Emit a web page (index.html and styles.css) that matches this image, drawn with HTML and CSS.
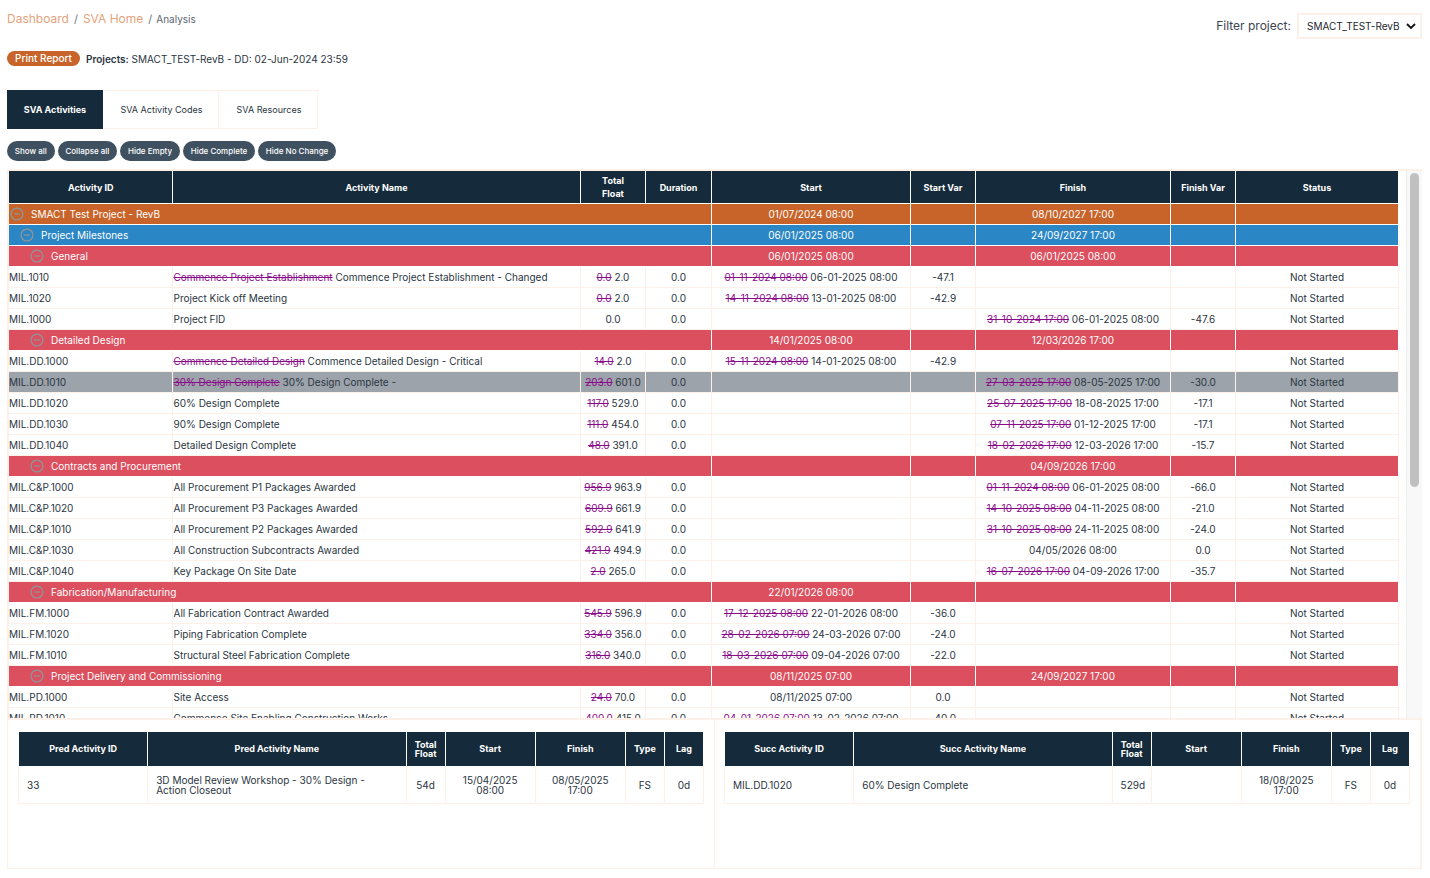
FILE: index.html
```html
<!DOCTYPE html>
<html lang="en">
<head>
    <meta charset="UTF-8">
    <title>SVA Analysis</title>
    <link rel="stylesheet" href="styles.css">
</head>
<body>
    <svg class="defs" width="0" height="0">
      <symbol id="minus" viewBox="0 0 14 14">
        <circle cx="7" cy="7" r="5.9" fill="none" stroke="currentColor" stroke-width="1.3"/>
        <path d="M4.2 7h5.6" stroke="currentColor" stroke-width="1.3"/>
      </symbol>
    </svg>

    <div class="topbar">
      <div class="crumbs">
        <a class="crumb-link">Dashboard</a><span class="crumb-sep">/</span><a class="crumb-link">SVA Home</a><span class="crumb-sep crumb-sep-small">/</span><span class="crumb-now">Analysis</span>
      </div>
      <div class="filter">
        <label class="filter-label">Filter project:</label>
        <div class="select">
          <span>SMACT_TEST-RevB</span>
          <svg width="10" height="7" viewBox="0 0 10 7"><path d="M1 1l4 4 4-4" fill="none" stroke="#111" stroke-width="1.8"/></svg>
        </div>
      </div>
    </div>

    <div class="report-row">
      <button type="button" class="print-btn">Print Report</button>
      <span class="report-text"><b>Projects:</b> SMACT_TEST-RevB - DD: 02-Jun-2024 23:59</span>
    </div>

    <div class="tabs">
      <div class="tab tab-active">SVA Activities</div>
      <div class="tab tab-codes">SVA Activity Codes</div>
      <div class="tab tab-res">SVA Resources</div>
    </div>

    <div class="actions">
      <button type="button" class="pill">Show all</button>
      <button type="button" class="pill">Collapse all</button>
      <button type="button" class="pill">Hide Empty</button>
      <button type="button" class="pill">Hide Complete</button>
      <button type="button" class="pill">Hide No Change</button>
    </div>

    <div class="main-panel">
      <div class="table-scroll">
        <table class="grid">
          <colgroup>
            <col class="c-id"><col class="c-name"><col class="c-float"><col class="c-dur">
            <col class="c-start"><col class="c-svar"><col class="c-finish"><col class="c-fvar"><col class="c-status">
          </colgroup>
          <thead>
            <tr><th>Activity ID</th><th>Activity Name</th><th>Total<br>Float</th><th>Duration</th><th>Start</th><th>Start Var</th><th>Finish</th><th>Finish Var</th><th>Status</th></tr>
          </thead>
          <tbody>
            <tr class="group g-project"><td colspan="4"><div class="g-title lvl1"><svg class="minus"><use href="#minus"/></svg>SMACT Test Project - RevB</div></td><td>01/07/2024 08:00</td><td></td><td>08/10/2027 17:00</td><td></td><td></td></tr>
            <tr class="group g-wbs"><td colspan="4"><div class="g-title lvl2"><svg class="minus"><use href="#minus"/></svg>Project Milestones</div></td><td>06/01/2025 08:00</td><td></td><td>24/09/2027 17:00</td><td></td><td></td></tr>
            <tr class="group g-sub"><td colspan="4"><div class="g-title lvl3"><svg class="minus"><use href="#minus"/></svg>General</div></td><td>06/01/2025 08:00</td><td></td><td>06/01/2025 08:00</td><td></td><td></td></tr>
            <tr><td>MIL.1010</td><td><s>Commence Project Establishment</s> Commence Project Establishment - Changed</td><td><s>0.0</s> 2.0</td><td>0.0</td><td><s>01-11-2024 08:00</s> 06-01-2025 08:00</td><td>-47.1</td><td></td><td></td><td>Not Started</td></tr>
            <tr><td>MIL.1020</td><td>Project Kick off Meeting</td><td><s>0.0</s> 2.0</td><td>0.0</td><td><s>14-11-2024 08:00</s> 13-01-2025 08:00</td><td>-42.9</td><td></td><td></td><td>Not Started</td></tr>
            <tr><td>MIL.1000</td><td>Project FID</td><td>0.0</td><td>0.0</td><td></td><td></td><td><s>31-10-2024 17:00</s> 06-01-2025 08:00</td><td>-47.6</td><td>Not Started</td></tr>
            <tr class="group g-sub"><td colspan="4"><div class="g-title lvl3"><svg class="minus"><use href="#minus"/></svg>Detailed Design</div></td><td>14/01/2025 08:00</td><td></td><td>12/03/2026 17:00</td><td></td><td></td></tr>
            <tr><td>MIL.DD.1000</td><td><s>Commence Detailed Design</s> Commence Detailed Design - Critical</td><td><s>14.0</s> 2.0</td><td>0.0</td><td><s>15-11-2024 08:00</s> 14-01-2025 08:00</td><td>-42.9</td><td></td><td></td><td>Not Started</td></tr>
            <tr class="selected"><td>MIL.DD.1010</td><td><s>30% Design Complete</s> 30% Design Complete -</td><td><s>203.0</s> 601.0</td><td>0.0</td><td></td><td></td><td><s>27-03-2025 17:00</s> 08-05-2025 17:00</td><td>-30.0</td><td>Not Started</td></tr>
            <tr><td>MIL.DD.1020</td><td>60% Design Complete</td><td><s>117.0</s> 529.0</td><td>0.0</td><td></td><td></td><td><s>25-07-2025 17:00</s> 18-08-2025 17:00</td><td>-17.1</td><td>Not Started</td></tr>
            <tr><td>MIL.DD.1030</td><td>90% Design Complete</td><td><s>111.0</s> 454.0</td><td>0.0</td><td></td><td></td><td><s>07-11-2025 17:00</s> 01-12-2025 17:00</td><td>-17.1</td><td>Not Started</td></tr>
            <tr><td>MIL.DD.1040</td><td>Detailed Design Complete</td><td><s>48.0</s> 391.0</td><td>0.0</td><td></td><td></td><td><s>18-02-2026 17:00</s> 12-03-2026 17:00</td><td>-15.7</td><td>Not Started</td></tr>
            <tr class="group g-sub"><td colspan="4"><div class="g-title lvl3"><svg class="minus"><use href="#minus"/></svg>Contracts and Procurement</div></td><td></td><td></td><td>04/09/2026 17:00</td><td></td><td></td></tr>
            <tr><td>MIL.C&amp;P.1000</td><td>All Procurement P1 Packages Awarded</td><td><s>956.9</s> 963.9</td><td>0.0</td><td></td><td></td><td><s>01-11-2024 08:00</s> 06-01-2025 08:00</td><td>-66.0</td><td>Not Started</td></tr>
            <tr><td>MIL.C&amp;P.1020</td><td>All Procurement P3 Packages Awarded</td><td><s>609.9</s> 661.9</td><td>0.0</td><td></td><td></td><td><s>14-10-2025 08:00</s> 04-11-2025 08:00</td><td>-21.0</td><td>Not Started</td></tr>
            <tr><td>MIL.C&amp;P.1010</td><td>All Procurement P2 Packages Awarded</td><td><s>592.9</s> 641.9</td><td>0.0</td><td></td><td></td><td><s>31-10-2025 08:00</s> 24-11-2025 08:00</td><td>-24.0</td><td>Not Started</td></tr>
            <tr><td>MIL.C&amp;P.1030</td><td>All Construction Subcontracts Awarded</td><td><s>421.9</s> 494.9</td><td>0.0</td><td></td><td></td><td>04/05/2026 08:00</td><td>0.0</td><td>Not Started</td></tr>
            <tr><td>MIL.C&amp;P.1040</td><td>Key Package On Site Date</td><td><s>2.0</s> 265.0</td><td>0.0</td><td></td><td></td><td><s>16-07-2026 17:00</s> 04-09-2026 17:00</td><td>-35.7</td><td>Not Started</td></tr>
            <tr class="group g-sub"><td colspan="4"><div class="g-title lvl3"><svg class="minus"><use href="#minus"/></svg>Fabrication/Manufacturing</div></td><td>22/01/2026 08:00</td><td></td><td></td><td></td><td></td></tr>
            <tr><td>MIL.FM.1000</td><td>All Fabrication Contract Awarded</td><td><s>545.9</s> 596.9</td><td>0.0</td><td><s>17-12-2025 08:00</s> 22-01-2026 08:00</td><td>-36.0</td><td></td><td></td><td>Not Started</td></tr>
            <tr><td>MIL.FM.1020</td><td>Piping Fabrication Complete</td><td><s>334.0</s> 356.0</td><td>0.0</td><td><s>28-02-2026 07:00</s> 24-03-2026 07:00</td><td>-24.0</td><td></td><td></td><td>Not Started</td></tr>
            <tr><td>MIL.FM.1010</td><td>Structural Steel Fabrication Complete</td><td><s>316.0</s> 340.0</td><td>0.0</td><td><s>18-03-2026 07:00</s> 09-04-2026 07:00</td><td>-22.0</td><td></td><td></td><td>Not Started</td></tr>
            <tr class="group g-sub"><td colspan="4"><div class="g-title lvl3"><svg class="minus"><use href="#minus"/></svg>Project Delivery and Commissioning</div></td><td>08/11/2025 07:00</td><td></td><td>24/09/2027 17:00</td><td></td><td></td></tr>
            <tr><td>MIL.PD.1000</td><td>Site Access</td><td><s>24.0</s> 70.0</td><td>0.0</td><td>08/11/2025 07:00</td><td>0.0</td><td></td><td></td><td>Not Started</td></tr>
            <tr><td>MIL.PD.1010</td><td>Commence Site Enabling Construction Works</td><td><s>400.0</s> 415.0</td><td>0.0</td><td><s>04-01-2026 07:00</s> 13-02-2026 07:00</td><td>-40.0</td><td></td><td></td><td>Not Started</td></tr>
          </tbody>
        </table>
      </div>
      <div class="scroll-track"><div class="scroll-thumb"></div></div>
    </div>

    <div class="detail-panel">
      <div class="detail-half detail-pred">
        <table class="links">
          <colgroup><col class="l-id"><col class="l-name"><col class="l-float"><col class="l-date"><col class="l-date"><col class="l-type"><col class="l-lag"></colgroup>
          <thead><tr><th>Pred Activity ID</th><th>Pred Activity Name</th><th>Total<br>Float</th><th>Start</th><th>Finish</th><th>Type</th><th>Lag</th></tr></thead>
          <tbody><tr><td class="left">33</td><td class="left">3D Model Review Workshop - 30% Design - Action Closeout</td><td>54d</td><td>15/04/2025 08:00</td><td>08/05/2025 17:00</td><td>FS</td><td>0d</td></tr></tbody>
        </table>
      </div>
      <div class="detail-half detail-succ">
        <table class="links">
          <colgroup><col class="l-id"><col class="l-name"><col class="l-float"><col class="l-date"><col class="l-date"><col class="l-type"><col class="l-lag"></colgroup>
          <thead><tr><th>Succ Activity ID</th><th>Succ Activity Name</th><th>Total<br>Float</th><th>Start</th><th>Finish</th><th>Type</th><th>Lag</th></tr></thead>
          <tbody><tr><td class="left">MIL.DD.1020</td><td class="left">60% Design Complete</td><td>529d</td><td></td><td>18/08/2025 17:00</td><td>FS</td><td>0d</td></tr></tbody>
        </table>
      </div>
    </div>
</body>
</html>
```
FILE: styles.css
```css
* { box-sizing: border-box; }
html, body { height: 100%; }
body {
    font-family: Inter, "Liberation Sans", sans-serif;
    margin: 0;
    padding: 0 8px 0 7px;
    color: #2a3542;
    background: #fff;
    overflow: hidden;
}
.defs { position: absolute; }

/* top */
.topbar { display: flex; justify-content: space-between; align-items: flex-start; height: 51px; }
.crumbs { padding-top: 10px; font-size: 12px; line-height: 16px; display: flex; align-items: center; }
.crumb-link { color: #e6a27c; }
.crumb-sep { color: #6b7480; margin: 0 5px; font-size: 11px; }
.crumb-sep-small { margin: 0 4px 0 5px; }
.crumb-now { color: #5b6570; font-size: 10px; padding-top: 1px; }
.filter { display: flex; align-items: center; padding-top: 13px; }
.filter-label { font-size: 12px; margin-right: 6px; padding-bottom: 2px; color: #3a4450; }
.select {
    width: 125px;
    height: 26px;
    border: 2px solid #fdf0e8;
    display: flex;
    align-items: center;
    justify-content: space-between;
    padding: 0 4px 0 8px;
    font-size: 10px;
    color: #1c2530;
}

.report-row { display: flex; align-items: center; height: 15px; gap: 6px; }
.print-btn {
    width: 73px;
    height: 15px;
    padding: 0;
    border: 0;
    border-radius: 8px;
    background: #c8642a;
    color: #fff;
    font-family: inherit;
    font-size: 10px;
    font-weight: 500;
    line-height: 15px;
}
.report-text { font-size: 10px; color: #2a3542; padding-top: 1px; }
.report-text b { font-weight: 600; }

/* tabs */
.tabs { display: flex; margin-top: 24px; height: 39px; }
.tab {
    display: flex;
    align-items: center;
    justify-content: center;
    font-size: 9px;
    color: #2a3542;
    border: 1px solid #fdf0e8;
    border-left-width: 0;
}
.tab-active { width: 96px; background: #152a3a; color: #fff; font-weight: 700; border: 0; }
.tab-codes { width: 116px; padding-left: 2px; }
.tab-res { width: 99px; padding-left: 2px; }

.actions { display: flex; gap: 3px; margin-top: 12px; height: 20px; }
.pill {
    height: 20px;
    padding: 0 7.8px;
    border: 0;
    border-radius: 10px;
    background: #3f5160;
    color: #fff;
    font-family: inherit;
    font-size: 8px;
    font-weight: 500;
}

/* main table */
.main-panel {
    display: flex;
    margin-top: 8px;
    width: 1415px;
    height: 549px;
    border-top: 2px solid #fdf0e8;
    border-left: 2px solid #fdf0e8;
}
.table-scroll { width: 1397px; overflow: hidden; }
.scroll-track {
    width: 16px;
    border-left: 1px solid #eeeeee;
    background: #f8f8f8;
    padding: 2px 3px 0;
}
.scroll-thumb { width: 9px; height: 314px; border-radius: 5px; background: #c0c0c0; }

.grid { border-collapse: collapse; table-layout: fixed; width: 1389px; font-size: 10px; }
.c-id { width: 163px; }
.c-name { width: 408px; }
.c-float { width: 65px; }
.c-dur { width: 66px; }
.c-start { width: 199px; }
.c-svar { width: 65px; }
.c-finish { width: 195px; }
.c-fvar { width: 65px; }
.c-status { width: 163px; }

.grid th {
    height: 32px;
    background: #152a3a;
    color: #fff;
    font-size: 9px;
    font-weight: 700;
    line-height: 13px;
    border: 1px solid #fff;
    border-top: 0;
    padding: 1px 0 0 1px;
}
.grid td {
    height: 21px;
    padding: 0 0 0 1px;
    border: 1px solid #fdf0e8;
    text-align: center;
    white-space: nowrap;
    overflow: hidden;
}
.grid th:first-child, .grid td:first-child { border-left: 0; }
.grid td:first-child, .grid td:nth-child(2) { text-align: left; }
.grid td:first-child { padding-left: 0; }
.grid s { color: #8a0a8a; }

.group td { color: #fff; border-color: #fff; }
.group td:nth-child(2) { text-align: center; }
.g-project td { background: #c8642a; }
.g-wbs td { background: #2b86c5; }
.g-sub td { background: #db4f5e; }
.g-title { display: flex; align-items: center; gap: 7px; }
.lvl1 { padding-left: 1px; }
.lvl2 { padding-left: 11px; }
.lvl3 { padding-left: 21px; }
.minus { width: 14px; height: 14px; color: #8f9499; flex: none; }

.selected td { background: #9ca3aa; border-color: #fdf0e8; }

/* predecessor and successor */
.detail-panel {
    display: flex;
    width: 1415px;
    height: 151px;
    border: 2px solid #fdf0e8;
    border-bottom-width: 1px;
    border-left-width: 1px;
}
.detail-half { padding-top: 11px; }
.detail-pred { width: 707px; padding-left: 10px; border-right: 1px solid #fdf0e8; }
.detail-succ { flex: 1; padding-left: 9px; }
.links { border-collapse: collapse; table-layout: fixed; width: 686px; font-size: 10px; }
.l-id { width: 129px; }
.l-name { width: 258px; }
.l-float { width: 39px; }
.l-date { width: 90px; }
.l-type { width: 39px; }
.l-lag { width: 39px; }
.links th {
    height: 35px;
    background: #152a3a;
    color: #fff;
    font-size: 9px;
    font-weight: 700;
    line-height: 9px;
    border: 1px solid #fff;
    padding: 0 0 1px;
}
.links td {
    height: 37px;
    border: 1px solid #fdf0e8;
    text-align: center;
    line-height: 10px;
    padding: 0 8px;
}
.links td.left { text-align: left; }
```
